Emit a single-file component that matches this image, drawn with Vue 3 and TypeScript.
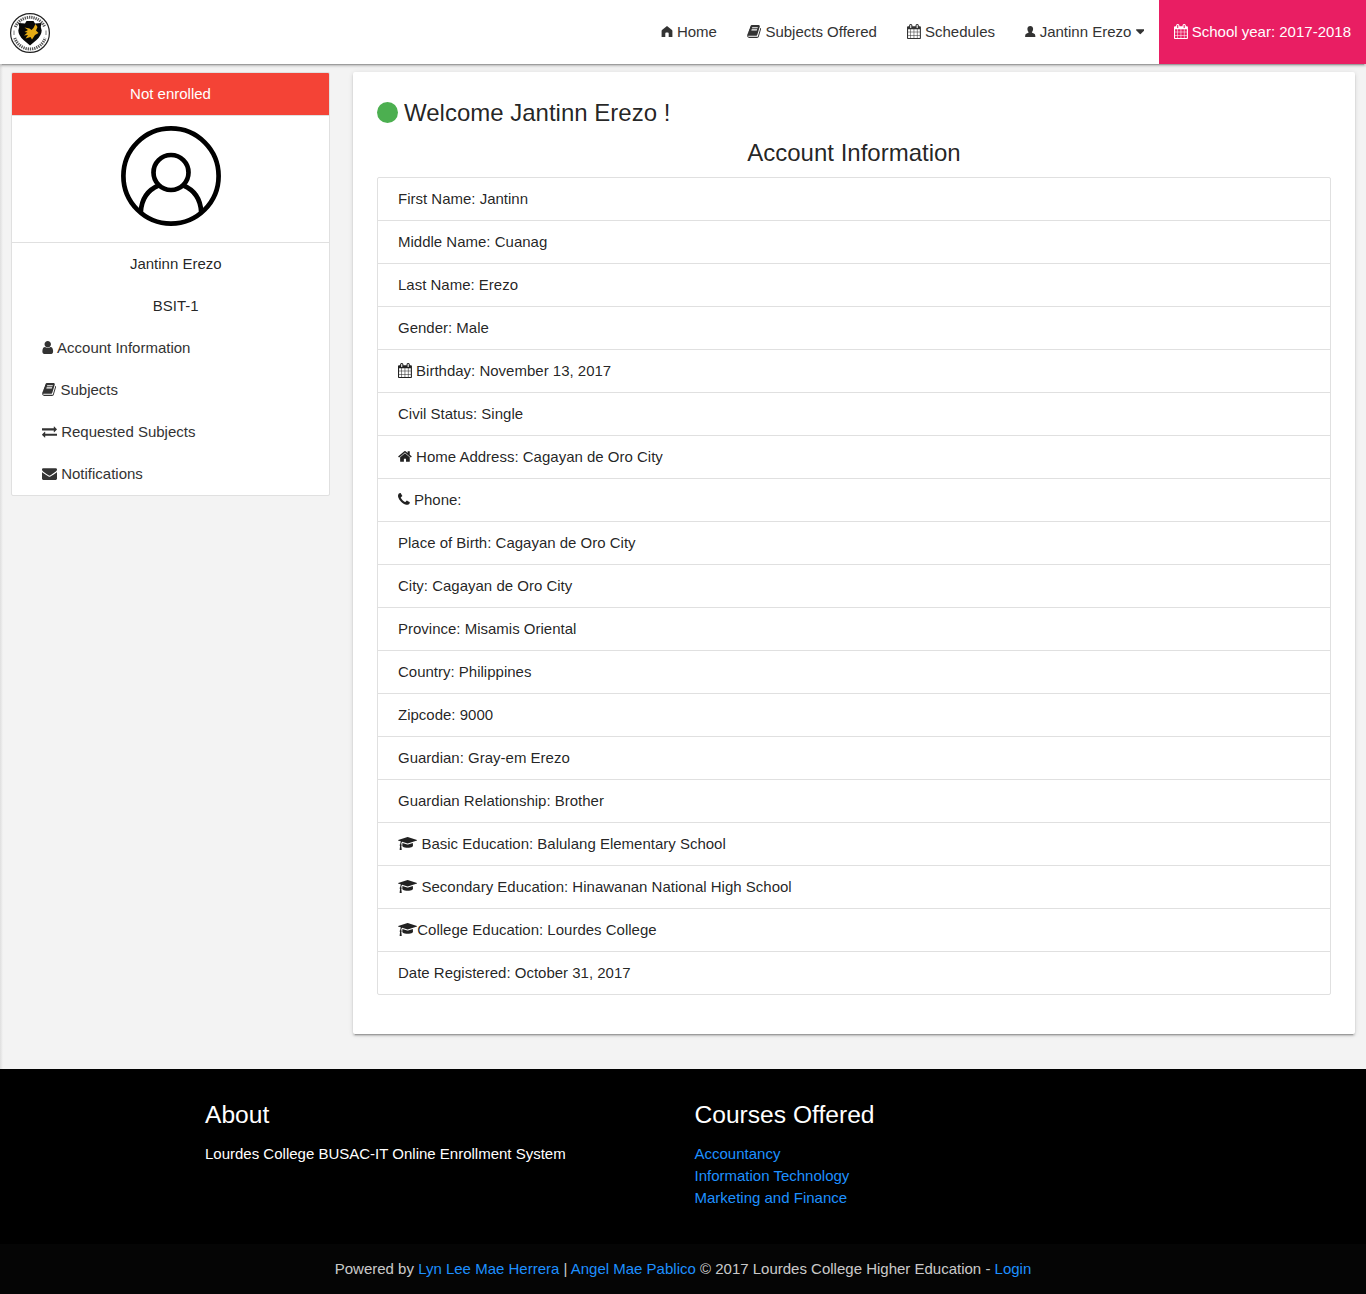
<script setup lang="ts">
interface Glyph {
  box: string
  w: number
  d: string
}

interface Row {
  text: string
  icon?: string
  tight?: boolean
}

const glyphs: Record<string, Glyph> = {
  home: {
    box: '64 0 1664 1792',
    w: 13.93,
    d: 'M1472 992v480q0 26-19 45t-45 19h-384v-384h-256v384h-384q-26 0-45-19t-19-45v-480q0-1 .5-3t.5-3l575-474 575 474q1 2 1 6zm223-69l-62 74q-8 9-21 11h-3q-13 0-21-7l-692-577-692 577q-12 8-24 7-13-2-21-11l-62-74q-8-10-7-23.5t11-21.5l719-599q32-26 76-26t76 26l244 204v-195q0-14 9-23t23-9h192q14 0 23 9t9 23v408l219 182q10 8 11 21.5t-7 23.5z',
  },
  user: {
    box: '210 0 1400 1792',
    w: 11.72,
    d: 'M1536 1399q0 109-62.5 187t-150.5 78h-854q-88 0-150.5-78t-62.5-187q0-85 8.5-160.5t31.5-152 58.5-131 94-89 134.5-34.5q131 128 313 128t313-128q76 0 134.5 34.5t94 89 58.5 131 31.5 152 8.5 160.5zm-256-887q0 159-112.5 271.5t-271.5 112.5-271.5-112.5-112.5-271.5 112.5-271.5 271.5-112.5 271.5 112.5 112.5 271.5z',
  },
  book: {
    box: '40 0 1712 1792',
    w: 14.33,
    d: 'M1703 478q40 57 18 129l-275 906q-19 64-76.5 107.5t-122.5 43.5h-923q-77 0-148.5-53.5t-99.5-131.5q-24-67-2-127 0-4 3-27t4-37q1-8-3-21.5t-3-19.5q2-11 8-21t16.5-23.5 16.5-23.5q23-38 45-91.5t30-91.5q3-10 .5-30t-.5-28q3-11 17-28t17-23q21-36 42-92t25-90q1-9-2.5-32t.5-28q4-13 22-30.5t22-22.5q19-26 42.5-84.5t27.5-96.5q1-8-3-25.5t-2-26.5q2-8 9-18t18-23 17-21q8-12 16.5-30.5t15-35 16-36 19.5-32 26.5-23.5 36-11.5 47.5 5.5l-1 3q38-9 51-9h761q74 0 114 56t18 130l-274 906q-36 119-71.5 153.5t-128.5 34.5h-869q-27 0-38 15-11 16-1 43 24 70 144 70h923q29 0 56-15.5t35-41.5l300-987q7-22 5-57 38 15 59 43zm-1064 2q-4 13 2 22.5t20 9.5h608q13 0 25.5-9.5t16.5-22.5l21-64q4-13-2-22.5t-20-9.5h-608q-13 0-25.5 9.5t-16.5 22.5zm-83 256q-4 13 2 22.5t20 9.5h608q13 0 25.5-9.5t16.5-22.5l21-64q4-13-2-22.5t-20-9.5h-608q-13 0-25.5 9.5t-16.5 22.5z',
  },
  calendar: {
    box: '64 0 1664 1792',
    w: 13.93,
    d: 'M192 1664h288v-288h-288v288zm352 0h320v-288h-320v288zm-352-352h288v-320h-288v320zm352 0h320v-320h-320v320zm-352-384h288v-288h-288v288zm736 736h320v-288h-320v288zm-384-736h320v-288h-320v288zm768 736h288v-288h-288v288zm-384-352h320v-320h-320v320zm-352-864v-288q0-13-9.5-22.5t-22.5-9.5h-64q-13 0-22.5 9.5t-9.5 22.5v288q0 13 9.5 22.5t22.5 9.5h64q13 0 22.5-9.5t9.5-22.5zm736 864h288v-320h-288v320zm-384-384h320v-288h-320v288zm384 0h288v-288h-288v288zm32-480v-288q0-13-9.5-22.5t-22.5-9.5h-64q-13 0-22.5 9.5t-9.5 22.5v288q0 13 9.5 22.5t22.5 9.5h64q13 0 22.5-9.5t9.5-22.5zm384-64v1280q0 52-38 90t-90 38h-1408q-52 0-90-38t-38-90v-1280q0-52 38-90t90-38h128v-96q0-66 47-113t113-47h64q66 0 113 47t47 113v96h384v-96q0-66 47-113t113-47h64q66 0 113 47t47 113v96h128q52 0 90 38t38 90z',
  },
  phone: {
    box: '192 0 1408 1792',
    w: 11.79,
    d: 'M1600 1240q0 27-10 70.5t-21 68.5q-21 50-122 106-94 51-186 51-27 0-53-3.5t-57.5-12.5-47-14.5-55.5-20.5-49-18q-98-35-175-83-127-79-264-216t-216-264q-48-77-83-175-3-9-18-49t-20.5-55.5-14.5-47-12.5-57.5-3.5-53q0-92 51-186 56-101 106-122 25-11 68.5-21t70.5-10q14 0 21 3 18 6 53 76 11 19 30 54t35 63.5 31 53.5q3 4 17.5 25t21.5 35.5 7 28.5q0 20-28.5 50t-62 55-62 53-28.5 46q0 9 5 22.5t8.5 20.5 14 24 11.5 19q76 137 174 235t235 174q2 1 19 11.5t24 14 20.5 8.5 22.5 5q18 0 46-28.5t53-62 55-62 50-28.5q14 0 28.5 7t35.5 21.5 25 17.5q25 15 53.5 31t63.5 35 54 30q70 35 76 53 3 7 3 21z',
  },
  envelope: {
    box: '0 0 1792 1792',
    w: 15,
    d: 'M1792 710v794q0 66-47 113t-113 47h-1472q-66 0-113-47t-47-113v-794q44 49 101 87 362 246 497 345 57 42 92.5 65.5t94.5 48 110 24.5h2q51 0 110-24.5t94.5-48 92.5-65.5q170-123 498-345 57-39 100-87zm0-294q0 79-49 151t-122 123q-376 261-468 325-10 7-42.5 31t-54 38.5-52 32.5-57.5 27-50 9h-2q-23 0-50-9t-57.5-27-52-32.5-54-38.5-42.5-31q-91-64-262-182.5t-205-142.5q-62-42-117-115.5t-55-136.5q0-78 41.5-130t118.5-52h1472q65 0 112.5 47t47.5 113z',
  },
  exchange: {
    box: '0 0 1792 1792',
    w: 15,
    d: 'M1792 1184v192q0 13-9.5 22.5t-22.5 9.5h-1376v192q0 13-9.5 22.5t-22.5 9.5q-12 0-24-10l-319-320q-9-9-9-22 0-14 9-23l320-320q9-9 23-9 13 0 22.5 9.5t9.5 22.5v192h1376q13 0 22.5 9.5t9.5 22.5zm0-544q0 14-9 23l-320 320q-9 9-23 9-13 0-22.5-9.5t-9.5-22.5v-192h-1376q-13 0-22.5-9.5t-9.5-22.5v-192q0-13 9.5-22.5t22.5-9.5h1376v-192q0-14 9-23t23-9q12 0 24 10l319 319q9 9 9 23z',
  },
  cap: {
    box: '0 0 2304 1792',
    w: 19.29,
    d: 'M1774 836l18 316q4 69-82 128t-235 93.5-323 34.5-323-34.5-235-93.5-82-128l18-316 574 181q22 7 48 7t48-7zm530-324q0 23-22 31l-1120 352q-4 1-10 1t-10-1l-652-206q-43 34-71 111.5t-34 178.5q63 36 63 109 0 69-58 107l58 433q2 14-8 25-9 11-24 11h-192q-15 0-24-11-10-11-8-25l58-433q-58-38-58-107 0-73 65-111 11-207 98-330l-333-104q-22-8-22-31t22-31l1120-352q4-1 10-1t10 1l1120 352q22 8 22 31z',
  },
  caret: {
    box: '384 0 1024 1792',
    w: 8.57,
    d: 'M1408 704q0 26-19 45l-448 448q-19 19-45 19t-45-19l-448-448q-19-19-19-45t19-45 45-19h896q26 0 45 19t19 45z',
  },
  house: {
    box: '0 0 12 15',
    w: 12,
    d: 'M6 1.9L1 6Q.6 6.400 .6 7V13.100H4.300V9.600Q4.300 8.600 5.200 8.600H6.800Q7.700 8.600 7.700 9.600V13.100H11.400V7Q11.400 6.400 11 6Z',
  },
  person: {
    box: '0 0 10.5 15',
    w: 10.5,
    d: 'M5.250 1.900C7 1.900 8.100 3.100 8.100 4.800C8.100 6.300 7.600 7.400 6.900 8.100C6.900 8.800 7.400 9.100 8.300 9.300C9.800 9.700 10.400 10.600 10.400 13.100H.1C.1 10.600 .7 9.700 2.200 9.300C3.100 9.100 3.600 8.800 3.600 8.100C2.900 7.400 2.400 6.300 2.400 4.800C2.400 3.100 3.500 1.900 5.250 1.900Z',
  },
}

const navItems: (Row & { caret?: boolean })[] = [
  { icon: 'house', text: 'Home' },
  { icon: 'book', text: 'Subjects Offered' },
  { icon: 'calendar', text: 'Schedules' },
  { icon: 'person', text: 'Jantinn Erezo', caret: true },
]

const menu: Row[] = [
  { icon: 'user', text: 'Account Information' },
  { icon: 'book', text: 'Subjects' },
  { icon: 'exchange', text: 'Requested Subjects' },
  { icon: 'envelope', text: 'Notifications' },
]

const details: Row[] = [
  { text: 'First Name: Jantinn' },
  { text: 'Middle Name: Cuanag' },
  { text: 'Last Name: Erezo' },
  { text: 'Gender: Male' },
  { icon: 'calendar', text: 'Birthday: November 13, 2017' },
  { text: 'Civil Status: Single' },
  { icon: 'home', text: 'Home Address: Cagayan de Oro City' },
  { icon: 'phone', text: 'Phone:' },
  { text: 'Place of Birth: Cagayan de Oro City' },
  { text: 'City: Cagayan de Oro City' },
  { text: 'Province: Misamis Oriental' },
  { text: 'Country: Philippines' },
  { text: 'Zipcode: 9000' },
  { text: 'Guardian: Gray-em Erezo' },
  { text: 'Guardian Relationship: Brother' },
  { icon: 'cap', text: 'Basic Education: Balulang Elementary School' },
  { icon: 'cap', text: 'Secondary Education: Hinawanan National High School' },
  { icon: 'cap', text: 'College Education: Lourdes College', tight: true },
  { text: 'Date Registered: October 31, 2017' },
]

const courses: string[] = ['Accountancy', 'Information Technology', 'Marketing and Finance']
</script>

<template>
  <div class="page">
    <nav class="nav">
      <svg class="logo" viewBox="0 0 40 40">
        <circle cx="20" cy="20" r="19.4" fill="#fff" stroke="#222" stroke-width="1.2" />
        <path d="M5.300 14A16 16 0 0 1 34.700 14M4.800 25A16 16 0 0 0 35.200 25" fill="none" stroke="#555" stroke-width="3" stroke-dasharray="1.300 .9" />
        <path d="M4 17.500V22M36 17.500V22" stroke="#aaa" stroke-width="1.500" />
        <path d="M16.500 8H23.500L25 10.500L31.500 10Q30 14 31.700 17.500Q31.500 22.500 26.500 27L20 32.500L13.500 27Q8.500 22.500 8.300 17.500Q10 14 8.500 10L15 10.500Z" fill="#080808" />
        <path d="M25.500 11L27.500 14L26 17.500L28.500 20L25 22L22 26.500L20.500 24L15.500 25.500L18 22L14 22.500L17.500 19.500L14.500 19L18 17L14.500 14.500L19.500 15.500L21.500 17L23.500 15Z" fill="#e5aa14" />
      </svg>
      <div class="links">
        <a v-for="item in navItems" :key="item.text" class="link">
          <svg class="ico" :viewBox="glyphs[item.icon!].box" :style="{ width: glyphs[item.icon!].w + 'px' }"><path :d="glyphs[item.icon!].d" /></svg>
          {{ item.text }}
          <svg v-if="item.caret" class="ico" :viewBox="glyphs.caret.box" :style="{ width: glyphs.caret.w + 'px' }"><path :d="glyphs.caret.d" /></svg>
        </a>
        <a class="link year">
          <svg class="ico" :viewBox="glyphs.calendar.box" :style="{ width: glyphs.calendar.w + 'px' }"><path :d="glyphs.calendar.d" /></svg>
          School year: 2017-2018
        </a>
      </div>
    </nav>

    <div class="body">
      <aside class="side">
        <div class="status">Not enrolled</div>
        <div class="avatar">
          <svg viewBox="0 0 100 100" fill="none" stroke="#000" stroke-width="4.700">
            <circle cx="50" cy="50" r="47.600" />
            <circle cx="50" cy="46.500" r="17.500" />
            <path d="M37.500 59.500C27 64 20.500 73 19.800 86M62.500 59.500C73 64 79.500 73 80.200 86" />
          </svg>
        </div>
        <div class="who">Jantinn Erezo</div>
        <div class="who">BSIT-1</div>
        <a v-for="m in menu" :key="m.text" class="item">
          <svg class="ico" :viewBox="glyphs[m.icon!].box" :style="{ width: glyphs[m.icon!].w + 'px' }"><path :d="glyphs[m.icon!].d" /></svg>
          {{ m.text }}
        </a>
      </aside>

      <main class="card">
        <h5 class="welcome"><span class="dot"></span>Welcome Jantinn Erezo !</h5>
        <h5 class="title">Account Information</h5>
        <ul class="list">
          <li v-for="r in details" :key="r.text">
            <svg v-if="r.icon" class="ico" :class="{ gap: !r.tight }" :viewBox="glyphs[r.icon].box" :style="{ width: glyphs[r.icon].w + 'px' }"><path :d="glyphs[r.icon].d" /></svg><span>{{ r.text }}</span>
          </li>
        </ul>
      </main>
    </div>

    <footer class="footer">
      <div class="cols">
        <section class="about">
          <h5>About</h5>
          <p>Lourdes College BUSAC-IT Online Enrollment System</p>
        </section>
        <section>
          <h5>Courses Offered</h5>
          <a v-for="c in courses" :key="c" class="course">{{ c }}</a>
        </section>
      </div>
      <div class="copy">
        Powered by <a>Lyn Lee Mae Herrera</a> | <a>Angel Mae Pablico</a> © 2017 Lourdes College Higher Education - <a>Login</a>
      </div>
    </footer>
  </div>
</template>

<style>
body {
  margin: 0;
  background: #f3f3f3;
}
</style>

<style scoped>
.page {
  box-sizing: border-box;
  display: flex;
  flex-direction: column;
  height: 1294px;
  background: linear-gradient(90deg, #dedede, #f3f3f3 3px);
  color: rgba(0, 0, 0, 0.87);
  font: 15px/22px "Liberation Sans", Arial, sans-serif;
}
h5 {
  margin: 0;
  font-size: 24px;
  font-weight: 400;
  line-height: 26px;
}
.nav,
.card {
  background: #fff;
  box-shadow: 0 2px 2px 0 rgba(0, 0, 0, 0.14), 0 1px 5px 0 rgba(0, 0, 0, 0.12), 0 3px 1px -2px rgba(0, 0, 0, 0.2);
}
.nav {
  display: flex;
  align-items: center;
  justify-content: space-between;
  height: 64px;
  padding-left: 10px;
}
.logo {
  width: 40px;
  height: 40px;
  margin-top: 2px;
}
.links {
  display: flex;
}
.link {
  padding: 0 15px;
  color: #333;
  line-height: 64px;
  white-space: nowrap;
}
.year {
  padding-left: 14.5px;
  background: #e91e63;
  color: #fff;
}
.ico {
  height: 15px;
  vertical-align: -2.14px;
  fill: currentColor;
}
.gap {
  margin-right: 4.17px;
}
.body {
  display: flex;
  align-items: flex-start;
  gap: 23px;
  height: 997px;
  padding: 8px 11px 0;
}
.side {
  box-sizing: border-box;
  width: 319px;
  border: 1px solid #e0e0e0;
  border-radius: 2px;
  background: #fff;
  overflow: hidden;
}
.status {
  padding: 10px 20px;
  border-bottom: 1px solid #e0e0e0;
  background: #f44336;
  background-clip: padding-box;
  color: #fff;
  text-align: center;
}
.avatar {
  display: flex;
  justify-content: center;
  height: 116px;
  padding-top: 10px;
  border-bottom: 1px solid #e0e0e0;
}
.avatar svg {
  width: 100px;
  height: 100px;
}
.who {
  padding: 10px 20px 10px 30.5px;
  text-align: center;
}
.item {
  display: block;
  padding: 10px 30px;
  color: #333;
}
.card {
  box-sizing: border-box;
  flex: 1;
  height: 962px;
  padding: 28px 24px 0;
  border-radius: 2px;
}
.welcome {
  display: flex;
  align-items: center;
}
.dot {
  width: 21px;
  height: 21px;
  margin: 0 6px 2px 0;
  border-radius: 50%;
  background: #4caf50;
}
.title {
  margin-top: 14px;
  text-align: center;
}
.list {
  margin: 11px 0 0;
  padding: 0;
  border: 1px solid #e0e0e0;
  border-radius: 2px;
  list-style: none;
}
.list li {
  padding: 10px 20px;
  border-bottom: 1px solid #e0e0e0;
}
.list li:last-child {
  border-bottom: 0;
}
.footer {
  display: flex;
  flex: 1;
  flex-direction: column;
  background: #000;
  color: #fff;
}
.cols {
  display: flex;
  flex: 1;
  padding: 33px 205px 0;
}
.about {
  width: 489.500px;
}
.cols p {
  margin: 0;
}
.cols h5 {
  margin-bottom: 15px;
  font-size: 24.6px;
}
.footer a {
  color: #1e90ff;
}
.course {
  display: block;
}
.copy {
  height: 50px;
  background: #050505;
  color: rgba(255, 255, 255, 0.8);
  line-height: 50px;
  text-align: center;
}
</style>
